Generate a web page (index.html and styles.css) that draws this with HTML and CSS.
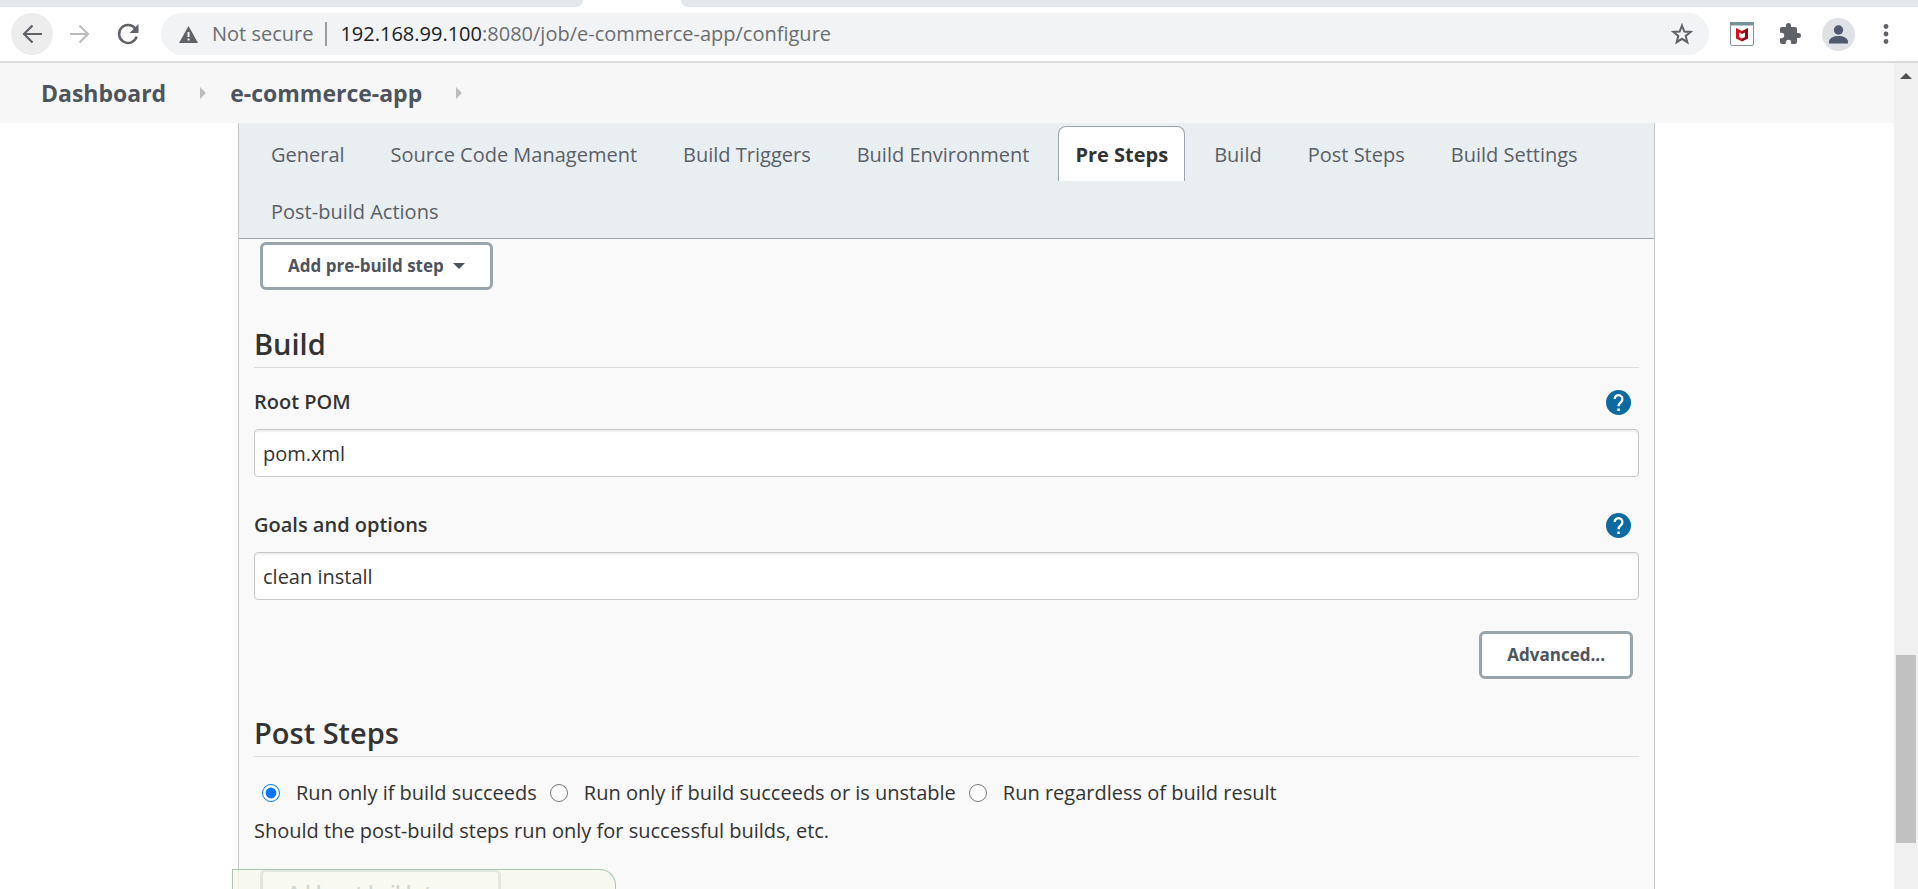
FILE: index.html
```html
<!DOCTYPE html>
<html lang="en">
<head>
<meta charset="utf-8">
<title>e-commerce-app Config</title>
<link rel="stylesheet" href="styles.css">
</head>
<body>
<div class="tabstrip"><div class="strip-left"></div><div class="strip-active"></div><div class="strip-right"></div></div>
<header class="toolbar">
  <button class="tool back" aria-label="Back"><svg width="24" height="24" viewBox="0 0 24 24"><path d="M22 12H4M12.500 3.500L4 12l8.500 8.500" fill="none" stroke="#5f6368" stroke-width="2.200"/></svg></button>
  <button class="tool" aria-label="Forward"><svg width="24" height="24" viewBox="0 0 24 24"><path d="M2 12h18M11.500 3.500L20 12l-8.500 8.500" fill="none" stroke="#babcbe" stroke-width="2.200"/></svg></button>
  <button class="tool reload" aria-label="Reload"><svg width="24" height="24" viewBox="0 0 24 24"><path d="M19.600 7A9 9 0 1 0 20.700 14.500" fill="none" stroke="#5f6368" stroke-width="2.500"/><path d="M22.500 2v9h-9z" fill="#5f6368"/></svg></button>
  <div class="address">
    <svg width="19" height="17" viewBox="0 0 19 17"><path d="M9.500 0L19 17H0z" fill="#5f6368"/><path d="M8.500 6h2v5h-2zM8.500 12.500h2v2h-2z" fill="#f1f3f4"/></svg>
    <span class="insecure">Not secure</span>
    <span class="url"><span class="host">192.168.99.100</span>:8080/job/e-commerce-app/configure</span>
    <button class="star" aria-label="Bookmark"><svg width="22" height="22" viewBox="0 0 22 22"><path d="M11 2.500l2.300 6 6.300.400-4.900 4 1.600 6.300L11 15.800l-5.300 3.400 1.600-6.300-4.900-4 6.300-.400z" fill="none" stroke="#5f6368" stroke-width="2"/></svg></button>
  </div>
  <button class="tool mcafee" aria-label="McAfee WebAdvisor"><svg width="24" height="24" viewBox="0 0 24 24"><rect x=".500" y=".500" width="23" height="23" rx="1.500" fill="#fff" stroke="#7c9297"/><path d="M0 0h24v3.500H0z" fill="#76939a"/><path d="M6 6l6 3v3l-3-1.500v4.500l3 1.500v3l-6-3z" fill="#d5101c"/><path d="M18 6l-6 3v3l3-1.500v4.500l-3 1.500v3l6-3z" fill="#8d0c16"/></svg></button>
  <button class="tool ext" aria-label="Extensions"><svg width="24" height="24" viewBox="0 0 24 24"><path d="M20.500 11H19V7c0-1.100-.900-2-2-2h-4V3.500a2.500 2.500 0 0 0-5 0V5H4c-1.100 0-2 .900-2 2v3.800h1.500a2.700 2.700 0 0 1 0 5.400H2V20c0 1.100.900 2 2 2h3.800v-1.500a2.700 2.700 0 0 1 5.400 0V22H17c1.100 0 2-.900 2-2v-4h1.500a2.500 2.500 0 0 0 0-5z" fill="#5f6368"/></svg></button>
  <button class="tool avatar" aria-label="Profile"><svg width="33" height="33" viewBox="0 0 33 33"><circle cx="16.500" cy="16.500" r="16.500" fill="#dfe1e7"/><circle cx="16.500" cy="12" r="4.700" fill="#50596e"/><path d="M7 25.500v-2c0-3.500 5-5.500 9.500-5.500s9.500 2 9.500 5.500v2z" fill="#50596e"/></svg></button>
  <button class="tool menu" aria-label="Menu"><svg width="6" height="20" viewBox="0 0 6 20"><g fill="#5f6368"><circle cx="3" cy="2.500" r="2.400"/><circle cx="3" cy="10" r="2.400"/><circle cx="3" cy="17.500" r="2.400"/></g></svg></button>
</header>
<div class="viewport">
  <div class="page">
    <nav class="crumbs" aria-label="Breadcrumb">
      <a href="#">Dashboard</a><svg width="6" height="12" viewBox="0 0 6 12"><path d="M0 0l6 6-6 6z" fill="#bdbdbd"/></svg>
      <a href="#">e-commerce-app</a><svg width="6" height="12" viewBox="0 0 6 12"><path d="M0 0l6 6-6 6z" fill="#bdbdbd"/></svg>
    </nav>
    <main class="panel">
      <nav class="tabs" aria-label="Sections">
        <a href="#">General</a><a href="#">Source Code Management</a><a href="#">Build Triggers</a><a href="#">Build Environment</a><a class="active" href="#">Pre Steps</a><a href="#">Build</a><a href="#">Post Steps</a><a href="#">Build Settings</a><a href="#">Post-build Actions</a>
      </nav>
      <form class="config">
        <button type="button" class="btn add">Add pre-build step<svg width="12" height="6" viewBox="0 0 12 6"><path d="M0 0h12L6 6z" fill="#4d545d"/></svg></button>
        <h2>Build</h2>
        <div class="field">
          <div class="label-row"><label for="pom">Root POM</label><button type="button" class="help" aria-label="Help for Root POM"><svg width="25" height="25" viewBox="0 0 25 25"><circle cx="12.500" cy="12.500" r="12.500" fill="#0b6aa2"/><path d="M8.600 9a3.900 3.900 0 1 1 6.400 3c-1.600 1.400-2.500 2-2.500 4.300" fill="none" stroke="#fff" stroke-width="2.300"/><path d="M11.300 18.500h2.500V21h-2.500z" fill="#fff"/></svg></button></div>
          <input id="pom" type="text" value="pom.xml">
        </div>
        <div class="field">
          <div class="label-row"><label for="goals">Goals and options</label><button type="button" class="help" aria-label="Help for Goals and options"><svg width="25" height="25" viewBox="0 0 25 25"><circle cx="12.500" cy="12.500" r="12.500" fill="#0b6aa2"/><path d="M8.600 9a3.900 3.900 0 1 1 6.400 3c-1.600 1.400-2.500 2-2.500 4.300" fill="none" stroke="#fff" stroke-width="2.300"/><path d="M11.300 18.500h2.500V21h-2.500z" fill="#fff"/></svg></button></div>
          <input id="goals" type="text" value="clean install">
        </div>
        <div class="advanced"><button type="button" class="btn">Advanced...</button></div>
        <h2>Post Steps</h2>
        <div class="radios">
          <label><input type="radio" name="run" checked>Run only if build succeeds</label>
          <label><input type="radio" name="run">Run only if build succeeds or is unstable</label>
          <label><input type="radio" name="run">Run regardless of build result</label>
        </div>
        <p class="hint">Should the post-build steps run only for successful builds, etc.</p>
        <button type="button" class="btn add">Add post-build step<svg width="12" height="6" viewBox="0 0 12 6"><path d="M0 0h12L6 6z" fill="#4d545d"/></svg></button>
      </form>
    </main>
    <div class="savebar"></div>
  </div>
  <div class="scrollbar"><svg width="12" height="6" viewBox="0 0 12 6"><path d="M6 0l6 6H0z" fill="#505050"/></svg><div class="thumb"></div></div>
</div>
</body>
</html>
```
FILE: styles.css
```css
* { box-sizing: border-box; }
body {
  margin: 0;
  height: 100vh;
  overflow: hidden;
  display: flex;
  flex-direction: column;
  background: #fff;
  color: #333;
  font: 20px/28px "Open Sans", "Noto Sans", sans-serif;
}
a { color: inherit; text-decoration: none; }
svg { display: block; flex: none; }
button, input { font: inherit; color: inherit; }

/* Browser chrome */
.tabstrip { display: flex; height: 7px; flex: none; background: #fff; }
.strip-left { width: 583px; background: #e4e8eb; border-bottom-right-radius: 7px; }
.strip-active { width: 98px; }
.strip-right { flex: 1; background: #e4e8eb; border-bottom-left-radius: 7px; }
.toolbar {
  display: flex;
  align-items: center;
  flex: none;
  height: 56px;
  padding: 0 29px 0 11px;
  border-bottom: 2px solid #dadbdc;
}
.tool {
  display: flex;
  align-items: center;
  justify-content: center;
  width: 42px;
  height: 42px;
  margin-right: 6px;
  padding: 0;
  border: 0;
  border-radius: 50%;
  background: none;
}
.back { background: #ededee; }
.reload { margin-right: 12px; }
.address {
  display: flex;
  align-items: center;
  flex: 1;
  height: 42px;
  padding: 0 16px 0 18px;
  border-radius: 21px;
  background: #f1f3f4;
  color: #6b6e72;
}
.insecure { margin-left: 14px; padding-right: 12px; border-right: 2px solid #9a9da1; line-height: 24px; }
.url { margin-left: 13px; flex: 1; }
.host { color: #202124; }
.star { padding: 0; border: 0; background: none; }
.mcafee { width: 24px; margin: 0 0 0 21px; border-radius: 0; }
.ext { width: 24px; margin: 0 0 0 24px; border-radius: 0; }
.avatar { width: 33px; margin: 0 0 0 20px; }
.menu { width: 6px; margin: 0 0 0 28px; }

/* Page */
.viewport { display: flex; flex: 1; min-height: 0; }
.page { position: relative; display: flex; flex-direction: column; flex: 1; overflow: hidden; }
.crumbs {
  display: flex;
  align-items: center;
  gap: 34px;
  flex: none;
  height: 60px;
  padding: 0 41px;
  background: #f7f7f7;
  color: #4d545d;
  font-size: 23px;
  font-weight: 700;
}
.crumbs a + svg + a { margin-left: -10px; }
.panel {
  flex: 1;
  margin: 0 239px 0 238px;
  border: solid #c6c8ca;
  border-width: 0 1px;
  background: #f9f9f9;
}
.tabs {
  display: flex;
  flex-wrap: wrap;
  gap: 2px 12px;
  padding: 3px 16px 0 15px;
  border-bottom: 1px solid #9aa5ad;
  background: #e9eef1;
  color: #5a6067;
}
.tabs a { padding: 14px 16px 12px; border: 1px solid transparent; border-bottom: 0; border-radius: 8px 8px 0 0; }
.tabs .active { border-color: #9aa5ad; background: #fff; color: #333; font-weight: 700; }
.config { padding: 3px 15px 0; }
.btn {
  display: flex;
  align-items: center;
  gap: 9px;
  height: 48px;
  padding: 0 25px;
  border: 3px solid #9aa5ab;
  border-radius: 6px;
  background: #fff;
  color: #4d545d;
  font-size: 17px;
  font-weight: 700;
}
.add { margin-left: 6px; }
h2 {
  margin: 34px 0 0;
  padding-bottom: 3px;
  border-bottom: 1px solid #dcdcdc;
  font-size: 29px;
  line-height: 40px;
  font-weight: 600;
}
.field { padding: 20px 0 14px; }
.label-row { display: flex; align-items: center; justify-content: space-between; padding-right: 8px; font-weight: 600; }
.help { padding: 0; border: 0; background: none; }
.field input {
  display: block;
  width: 100%;
  height: 48px;
  margin-top: 13px;
  padding: 0 8px;
  border: 1px solid #c6c8ca;
  border-radius: 4px;
  background: #fff;
  box-shadow: inset 0 2px 2px #eeeeee;
}
.advanced { display: flex; justify-content: flex-end; padding: 17px 6px 0 0; }
.radios { display: flex; gap: 13px; padding: 22px 0 0 8px; }
.radios label { display: flex; align-items: center; }
.radios input { width: 18px; height: 18px; margin: 0 16px 0 0; accent-color: #0075ff; }
.hint { margin: 10px 0 24px; }
.savebar {
  position: absolute;
  left: 232px;
  bottom: 0;
  width: 384px;
  height: 20px;
  border: 1px solid #a9c8b2;
  border-bottom: 0;
  border-top-right-radius: 16px;
  background: rgba(246, 248, 238, 0.8);
}
.scrollbar {
  display: flex;
  flex-direction: column;
  align-items: center;
  justify-content: space-between;
  width: 24px;
  padding: 10px 0 46px;
  background: #f0f0f0;
}
.thumb { width: 20px; height: 188px; background: #c1c1c1; }
```
